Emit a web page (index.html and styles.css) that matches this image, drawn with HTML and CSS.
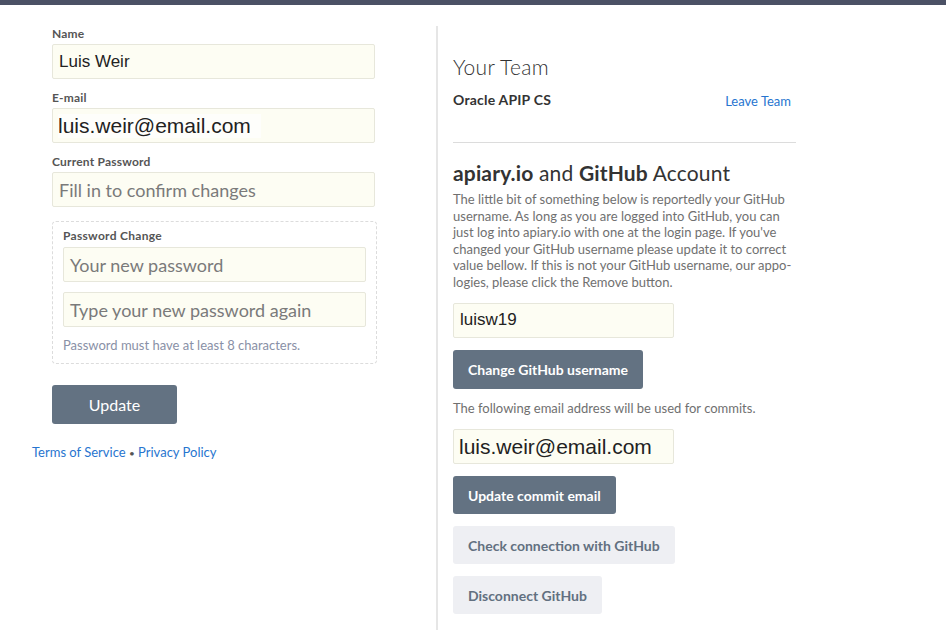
FILE: index.html
```html
<!DOCTYPE html>
<html>
<head>
<meta charset="utf-8">
<link rel="stylesheet" href="styles.css">
</head>
<body>
<div class="topbar"></div>
<div class="page">
  <div class="left">
    <div class="field">
      <label class="label">Name</label>
      <div class="input value">Luis Weir</div>
    </div>
    <div class="field">
      <label class="label">E-mail</label>
      <div class="input value big"><span class="autofill">luis.weir@email.com</span></div>
    </div>
    <div class="field">
      <label class="label">Current Password</label>
      <div class="input placeholder">Fill in to confirm changes</div>
    </div>
    <div class="pwbox">
      <label class="label">Password Change</label>
      <div class="input placeholder">Your new password</div>
      <div class="input placeholder second">Type your new password again</div>
      <p class="hint">Password must have at least 8 characters.</p>
    </div>
    <button class="btn dark update">Update</button>
    <div class="footer-links"><a href="#">Terms of Service</a> <span class="dot">•</span> <a href="#">Privacy Policy</a></div>
  </div>
  <div class="right">
    <h2 class="heading">Your Team</h2>
    <div class="team-row">
      <span class="team-name">Oracle APIP CS</span>
      <a href="#" class="leave">Leave Team</a>
    </div>
    <hr class="rule">
    <h2 class="heading gh"><b>apiary.io</b> and <b>GitHub</b> Account</h2>
    <p class="para">The little bit of something below is reportedly your GitHub username. As long as you are logged into GitHub, you can just log into apiary.io with one at the login page. If you've changed your GitHub username please update it to correct value bellow. If this is not your GitHub username, our appo-logies, please click the Remove button.</p>
    <div class="input value short gh-user">luisw19</div>
    <button class="btn dark small">Change GitHub username</button>
    <p class="para note">The following email address will be used for commits.</p>
    <div class="input value big short">luis.weir@email.com</div>
    <button class="btn dark small commit">Update commit email</button>
    <button class="btn light small">Check connection with GitHub</button>
    <button class="btn light small">Disconnect GitHub</button>
  </div>
</div>
</body>
</html>
```
FILE: styles.css
```css
* { box-sizing: border-box; }
html, body { margin: 0; padding: 0; background: #fff; }
body { font-family: Lato, "Open Sans", sans-serif; color: #333; width: 946px; height: 630px; overflow: hidden; }

.topbar { height: 5px; background: #4b5165; }

.page { display: flex; align-items: flex-start; }

.left { width: 436px; padding: 22px 0 0 52px; }
.field { width: 323px; margin-bottom: 12px; }
.label { display: block; font-size: 12px; line-height: 14px; font-weight: 700; color: #555; letter-spacing: 0.2px; margin-bottom: 3px; }

.input {
  height: 35px;
  background: #fdfdf3;
  border: 1px solid #e7e7db;
  border-radius: 2px;
  padding: 0 6px;
  display: flex;
  align-items: center;
  font-size: 17px;
  white-space: nowrap;
  overflow: hidden;
}
.value { font-family: "Liberation Sans", Arial, sans-serif; color: #222; }
.value.big { font-size: 21px; padding-left: 5px; }
.autofill { background: #fefefb; padding-right: 10px; }
.placeholder { font-family: Lato, sans-serif; color: #7a7a7a; font-size: 18px; }

.pwbox {
  width: 325px;
  margin-top: 14px;
  border: 1px dashed #dcdcdc;
  border-radius: 4px;
  padding: 7px 10px 10px 10px;
}
.pwbox .label { margin-bottom: 4px; letter-spacing: 0.3px; }
.pwbox .second { margin-top: 10px; }
.hint { margin: 10px 0 0; font-size: 13px; line-height: 16px; color: #8990a6; }

.btn {
  display: block;
  border: none;
  border-radius: 3px;
  font-family: Lato, sans-serif;
  cursor: pointer;
}
.btn.dark { background: #637282; color: #fff; }
.btn.light { background: #eeeff3; color: #627080; }
.update { margin-top: 21px; width: 125px; height: 39px; font-size: 16px; }

.footer-links { margin: 20px 0 0 -20px; font-size: 13px; line-height: 16px; color: #555; }
.footer-links a { color: #2775cf; text-decoration: none; }
.footer-links .dot { font-size: 10px; }

.right {
  margin-top: 21px;
  height: 604px;
  border-left: 2px solid #e6e6e6;
  padding-left: 15px;
  width: 360px;
}
.heading { margin: 29px 0 0; font-size: 21px; line-height: 24px; font-weight: 300; letter-spacing: 0.3px; color: #333; }
.team-row { display: flex; justify-content: space-between; width: 343px; padding-right: 5px; margin-top: 13px; font-size: 13px; line-height: 16px; }
.team-name { font-weight: 700; color: #333; font-size: 14px; letter-spacing: 0.2px; }
.leave { color: #2775cf; text-decoration: none; margin-top: 1px; }
.rule { width: 343px; margin: 33px 0 0; border: none; border-top: 1px solid #dcdcdc; }
.heading.gh { margin-top: 18px; font-weight: 400; letter-spacing: 0.15px; }
.heading.gh b { font-weight: 700; }
.para { margin: 6px 0 0; width: 343px; font-size: 13px; line-height: 16.6px; color: #707070; }
.short { width: 221px; }
.gh-user { margin-top: 12px; }
.small { font-size: 14px; font-weight: 700; height: 39px; padding: 0 15px; margin-top: 12px; }
.small.commit { height: 38px; }
.note { margin-top: 11px; }
.note + .input { margin-top: 13px; }
.light { height: 38px; }
```
